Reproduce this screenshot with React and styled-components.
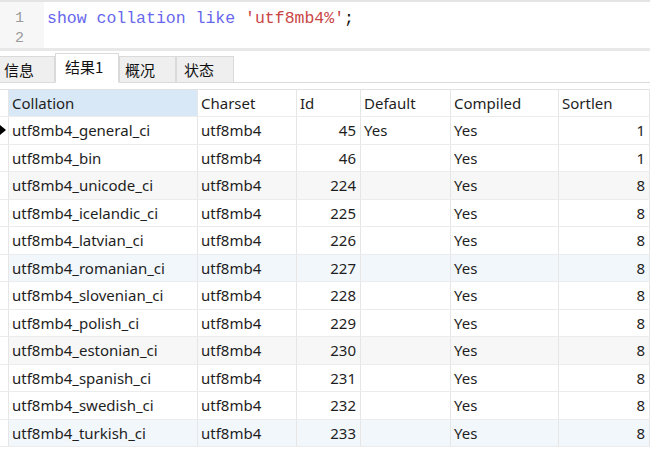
import React from 'react';
import styled, { createGlobalStyle } from 'styled-components';

const GlobalStyle = createGlobalStyle`
  html, body {
    margin: 0;
    padding: 0;
    background: #ffffff;
    overflow: hidden;
  }
`;

const Page = styled.div`
  width: 650px;
  height: 452px;
  display: flex;
  flex-direction: column;
  background: #ffffff;
  overflow: hidden;

  & > * {
    flex-shrink: 0;
  }
`;

const Editor = styled.div`
  height: 46px;
  border-top: 2px solid #e4e4e4;
  display: flex;
  background: #ffffff;
`;

const Gutter = styled.div`
  width: 44px;
  padding-top: 7px;
  background: #f7f7f7;
  box-sizing: border-box;
  padding-right: 20px;
  text-align: right;
  font-family: "Liberation Mono", monospace;
  font-size: 15px;
  line-height: 20px;
  color: #9a9a9a;
`;

const Code = styled.div`
  padding: 7px 0 0 3px;
  font-family: "Liberation Mono", monospace;
  font-size: 16.5px;
  line-height: 20px;
  white-space: pre;
  color: #111;
`;

const Keyword = styled.span`
  color: #6767ec;
`;

const Str = styled.span`
  color: #c94646;
`;

const Splitter = styled.div`
  height: 3px;
  background: #e8e8e8;
`;

const TabBar = styled.div`
  height: 31px;
  display: flex;
  align-items: flex-end;
  border-bottom: 1px solid #dadada;
  font-family: "Noto Sans CJK SC", "Noto Sans", sans-serif;
  font-size: 15px;
  color: #111;
`;

const Tab = styled.div`
  box-sizing: border-box;
  width: ${p => p.w}px;
  height: ${p => (p.active ? 30 : 27)}px;
  margin-bottom: -1px;
  padding-left: ${p => p.pad}px;
  display: flex;
  align-items: center;
  background: ${p => (p.active ? '#ffffff' : '#efefef')};
  border: 1px solid #dadada;
  border-bottom: ${p => (p.active ? '1px solid #ffffff' : '1px solid #dadada')};
  border-left: ${p => (p.first ? 'none' : '1px solid #dadada')};
  padding-bottom: ${p => (p.active ? 4 : 1)}px;
`;

const Grid = styled.div`
  margin-top: 6px;
  border-top: 1px solid #e2e2e2;
  font-family: "Noto Sans", "Noto Sans CJK SC", sans-serif;
  font-size: 15px;
  color: #1e1e1e;
`;

const Row = styled.div`
  display: grid;
  grid-template-columns: 9px 189px 99px 64px 90px 108px 91px;
  height: ${p => (p.header ? 27 : 27.5)}px;
  box-sizing: border-box;
  border-bottom: 1px solid #ececec;
  background: ${p => p.bg || '#ffffff'};
`;

const Cell = styled.div`
  box-sizing: border-box;
  border-right: 1px solid #e6e6e6;
  padding: 0 ${p => (p.right ? 4 : 0)}px 0 ${p => (p.right ? 0 : 3)}px;
  display: flex;
  align-items: center;
  justify-content: ${p => (p.right ? 'flex-end' : 'flex-start')};
  white-space: nowrap;
  overflow: hidden;
  background: ${p => p.bg || 'transparent'};
`;

const Indicator = styled.div`
  box-sizing: border-box;
  border-right: 1px solid #e6e6e6;
  display: flex;
  align-items: center;
  background: #ffffff;
`;

const Arrow = styled.svg`
  width: 6px;
  height: 10px;
  display: block;
`;

const columns = [
  { label: 'Collation' },
  { label: 'Charset' },
  { label: 'Id', right: true },
  { label: 'Default' },
  { label: 'Compiled' },
  { label: 'Sortlen', right: true },
];

const rows = [
  ['utf8mb4_general_ci', 'utf8mb4', 45, 'Yes', 'Yes', 1],
  ['utf8mb4_bin', 'utf8mb4', 46, '', 'Yes', 1],
  ['utf8mb4_unicode_ci', 'utf8mb4', 224, '', 'Yes', 8],
  ['utf8mb4_icelandic_ci', 'utf8mb4', 225, '', 'Yes', 8],
  ['utf8mb4_latvian_ci', 'utf8mb4', 226, '', 'Yes', 8],
  ['utf8mb4_romanian_ci', 'utf8mb4', 227, '', 'Yes', 8],
  ['utf8mb4_slovenian_ci', 'utf8mb4', 228, '', 'Yes', 8],
  ['utf8mb4_polish_ci', 'utf8mb4', 229, '', 'Yes', 8],
  ['utf8mb4_estonian_ci', 'utf8mb4', 230, '', 'Yes', 8],
  ['utf8mb4_spanish_ci', 'utf8mb4', 231, '', 'Yes', 8],
  ['utf8mb4_swedish_ci', 'utf8mb4', 232, '', 'Yes', 8],
  ['utf8mb4_turkish_ci', 'utf8mb4', 233, '', 'Yes', 8],
];

// every third row is tinted, alternating grey / pale blue
const rowBg = (i) => {
  if (i % 3 !== 2) return '#ffffff';
  return Math.floor(i / 3) % 2 === 0 ? '#f7f7f7' : '#f2f7fc';
};

const App = () => {
  return (
    <>
      <GlobalStyle />
      <Page>
        <Editor>
          <Gutter>
            <div>1</div>
            <div>2</div>
          </Gutter>
          <Code>
            <Keyword>show collation like </Keyword>
            <Str>'utf8mb4%'</Str>;
          </Code>
        </Editor>
        <Splitter />
        <TabBar>
          <Tab w={55} pad={4} first>信息</Tab>
          <Tab w={64} pad={9} active>结果1</Tab>
          <Tab w={57} pad={5}>概况</Tab>
          <Tab w={58} pad={7}>状态</Tab>
        </TabBar>
        <Grid>
          <Row header>
            <Indicator />
            {columns.map((c, i) => (
              <Cell key={c.label} bg={i === 0 ? '#d9e8f6' : undefined}>
                {c.label}
              </Cell>
            ))}
          </Row>
          {rows.map((r, i) => (
            <Row key={r[0]} bg={rowBg(i)}>
              <Indicator>
                {i === 0 && (
                  <Arrow viewBox="0 0 6 10">
                    <path d="M0 0 L6 5 L0 10 Z" fill="#000" />
                  </Arrow>
                )}
              </Indicator>
              {r.map((v, j) => (
                <Cell key={j} right={columns[j].right}>
                  {v}
                </Cell>
              ))}
            </Row>
          ))}
        </Grid>
      </Page>
    </>
  );
};

export default App;
